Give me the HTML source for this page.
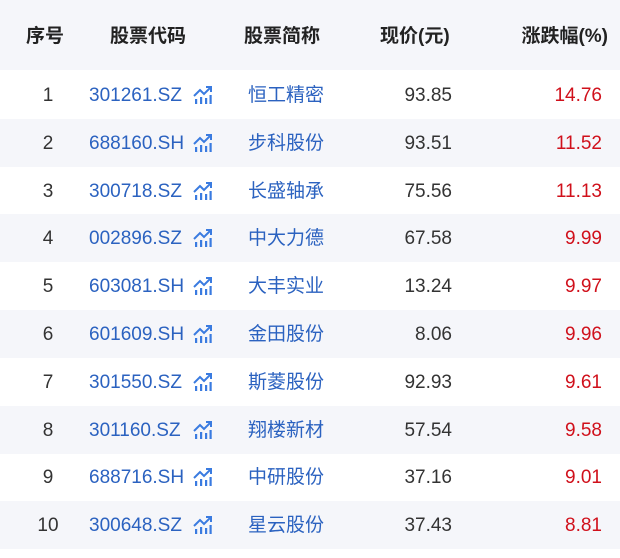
<!DOCTYPE html>
<html><head><meta charset="utf-8"><style>
body{margin:0;width:620px;height:558px;background:#fff;font-family:"Liberation Sans","Noto Sans CJK SC",sans-serif;overflow:hidden}
.h{position:absolute;left:0;top:0;width:620px;height:70px;background:#f5f6fa}
.r{position:absolute;left:0;width:620px;height:48px}
.g{background:#f5f6fa}
.t{position:absolute;white-space:nowrap;font-size:19px;line-height:50px}
.hd{font-size:19px;font-weight:bold;color:#222;line-height:74px}
.n{color:#333;text-align:center;width:40px;left:28px}
.c{color:#2b62c0;left:89px}
.ic{position:absolute;left:193px;top:15px}
.nm{color:#2b62c0;left:248px}
.p{color:#333;text-align:right;right:168px}
.z{color:#d0101b;text-align:right;right:18px}
</style></head><body>
<div class="h">
<div class="t hd" style="left:26px">序号</div>
<div class="t hd" style="left:110px">股票代码</div>
<div class="t hd" style="left:244px">股票简称</div>
<div class="t hd" style="left:380px">现价(元)</div>
<div class="t hd" style="right:12px">涨跌幅(%)</div>
</div>
<div id="rows"></div>
<script>
var d=[["1","301261.SZ","恒工精密","93.85","14.76"],["2","688160.SH","步科股份","93.51","11.52"],["3","300718.SZ","长盛轴承","75.56","11.13"],["4","002896.SZ","中大力德","67.58","9.99"],["5","603081.SH","大丰实业","13.24","9.97"],["6","601609.SH","金田股份","8.06","9.96"],["7","301550.SZ","斯菱股份","92.93","9.61"],["8","301160.SZ","翔楼新材","57.54","9.58"],["9","688716.SH","中研股份","37.16","9.01"],["10","300648.SZ","星云股份","37.43","8.81"]];
var ic='<svg class="ic" width="20" height="18" viewBox="0 0 20 18"><path d="M1 10 L7 4 L11 8 L18 1 M13 1 H18 V6" fill="none" stroke="#3a7be0" stroke-width="2"/><rect x="2" y="13" width="2.2" height="5" fill="#3a7be0"/><rect x="7" y="11" width="2.2" height="7" fill="#3a7be0"/><rect x="12" y="12" width="2.2" height="6" fill="#3a7be0"/><rect x="16.5" y="9" width="2.2" height="9" fill="#3a7be0"/></svg>';
var h='';d.forEach(function(x,i){h+='<div class="r'+(i%2?' g':'')+'" style="top:'+(71+i*47.8)+'px"><div class="t n">'+x[0]+'</div><div class="t c">'+x[1]+'</div>'+ic+'<div class="t nm">'+x[2]+'</div><div class="t p">'+x[3]+'</div><div class="t z">'+x[4]+'</div></div>'});
document.getElementById('rows').innerHTML=h;
</script>
</body></html>
